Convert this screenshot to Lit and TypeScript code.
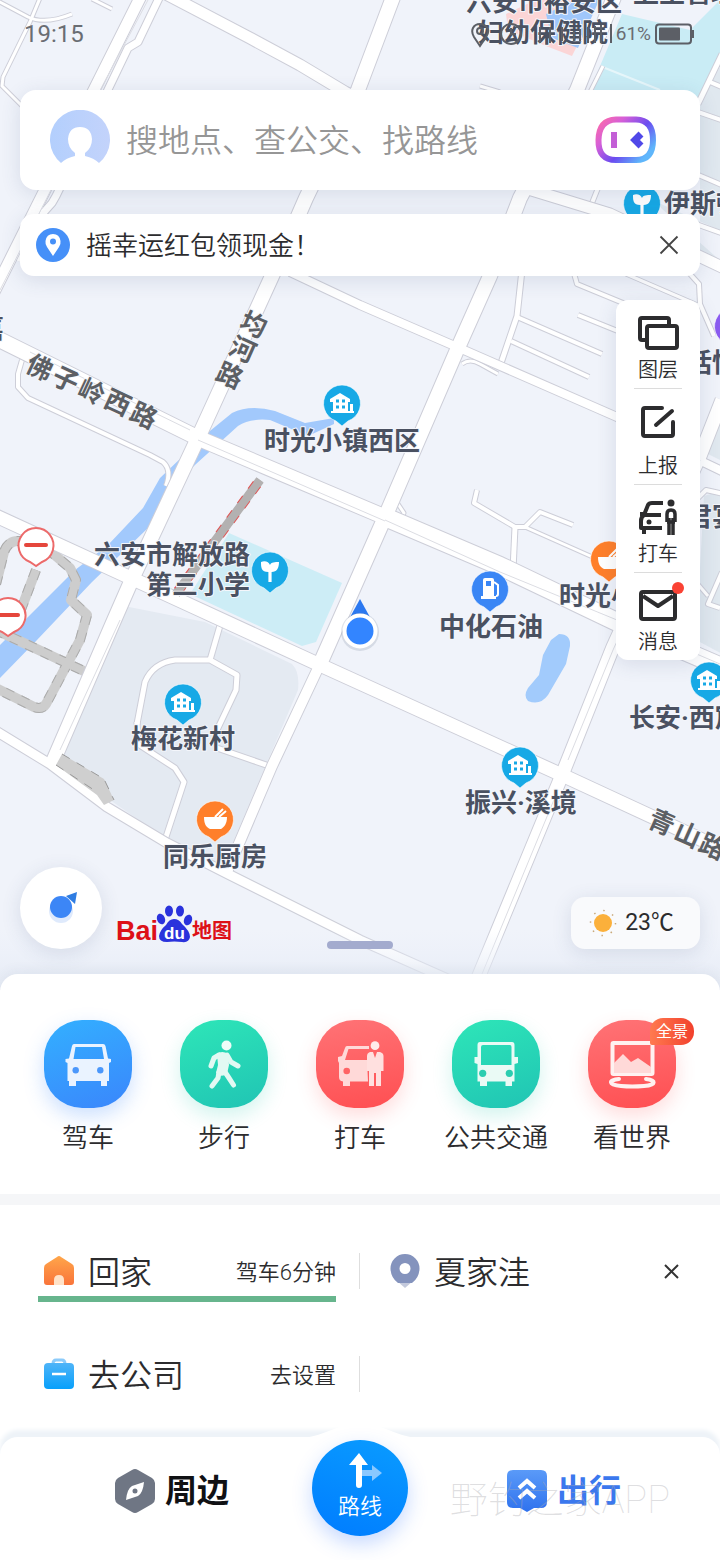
import { LitElement, html, svg, css } from "lit";
import { customElement } from "lit/decorators.js";

type Road = [string, number];
type Kind = "house" | "leaf" | "food" | "fuel" | "shop";

const lanes: Road[] = [
  ["M-4 0L28 17Q45 25 72 14", 3],
  ["M40 -2L30 22L3 77L2 86L24 108", 3],
  ["M92 -1L112 9", 3],
  ["M22 360L18 374L18 387L28 398L150 455L163 462Q172 470 166 486", 4],
  ["M221 622L210 660", 5],
  ["M137 724L145 682Q153 663 175 660L210 660L237 675L236 690L217 730", 5],
  ["M137 722L138 744L175 768L184 782L165 840", 5],
  ["M217 748L272 767", 5],
  ["M522 270L517 316L500 366", 5],
  ["M517 317L602 354", 4],
  ["M511 341L589 377", 4],
  ["M462 364Q470 358 480 364L498 374", 3],
  ["M573 270L577 284L640 310", 4],
  ["M626 274L700 306", 3],
  ["M690 274L699 284L700 304L714 336", 4],
  ["M578 315L640 340", 4],
  ["M477 490L474 503L515 527L525 527L540 512L573 525", 4],
  ["M515 527L513 570", 5],
  ["M525 527L606 563", 3],
  ["M398 504L404 513L400 520", 3],
  ["M598 188L590 208", 4],
  ["M603 66L588 96", 3],
  ["M722 54L698 104", 5],
  ["M710 82L724 88", 4],
  ["M698 112L724 121", 4],
  ["M696 174L724 186", 4],
  ["M696 224L724 234", 4],
  ["M696 500L706 490L724 494", 4],
  ["M722 572L708 604L720 608", 4],
  ["M696 582L708 596", 3],
  ["M480 86L500 92", 3],
];

const streets: Road[] = [
  ["M141 -4L92 94L45 190L-6 292", 11],
  ["M160 -4L138 42L128 48L104 98L56 196L52 203L44 212L20 262", 7],
  ["M166 -6L250 38L300 65L345 92L525 188L610 214L724 268", 11],
  ["M395 -8L358 90L306 198L272 276L198 438L133 577L112 625L52 764", 14],
  ["M616 -8L577 90L520 198L490 276L457 350L385 517L320 664", 14],
  ["M320 664L272 766L226 874", 10],
  ["M290 272L360 305L457 347L617 417L703 462L724 472", 8],
  ["M-4 338L198 438L385 517", 15],
  ["M385 517L500 566L617 622L724 668", 18],
  ["M-4 516L133 579L320 665L562 775L724 850", 13],
  ["M-4 731L50 764L107 807L167 843L228 874L360 940L450 980", 9],
  ["M722 400L700 456L613 647L562 775L478 978", 13],
];

const medians = [
  "M148 0L96 98L50 192L0 290",
  "M385 520L500 572L617 620L720 664",
  "M198 440L385 521",
  "M120 620L60 750",
  "M700 460L613 650L568 760M558 790L482 974",
  "M30 352L190 430",
];

const places: { text: string; x: number; y: number; end?: boolean; pin?: [Kind, number, number] }[] = [
  { text: "六安市裕安区", x: 466, y: 11 },
  { text: "妇幼保健院", x: 478, y: 42 },
  { text: "卫生管理", x: 633, y: 2 },
  { text: "伊斯顿", x: 664, y: 213, pin: ["leaf", 642, 203] },
  { text: "时光小镇西区", x: 264, y: 450, pin: ["house", 342, 403] },
  { text: "六安市解放路", x: 250, y: 564, end: true, pin: ["leaf", 270, 570] },
  { text: "第三小学", x: 250, y: 594, end: true },
  { text: "中化石油", x: 439, y: 636, pin: ["fuel", 490, 589] },
  { text: "时光小镇", x: 559, y: 605, pin: ["food", 609, 559] },
  { text: "梅花新村", x: 131, y: 748, pin: ["house", 183, 702] },
  { text: "长安·西宸", x: 629, y: 727, pin: ["house", 709, 680] },
  { text: "振兴·溪境", x: 465, y: 812, pin: ["house", 520, 765] },
  { text: "同乐厨房", x: 163, y: 866, pin: ["food", 215, 819] },
  { text: "恬恬", x: 686, y: 372, pin: ["shop", 733, 326] },
  { text: "君宴", x: 686, y: 526 },
  { text: "嘉", x: -22, y: 338 },
];

const roadNames: { text: string; angle: number; at: [number, number][] }[] = [
  { text: "佛子岭西路", angle: 25, at: [[40, 367], [66, 379], [92, 391], [118, 402], [144, 415]] },
  { text: "均河路", angle: 24, at: [[254, 324], [243, 349], [230, 375]] },
  { text: "青山路", angle: 24, at: [[662, 822], [688, 834], [713, 846]] },
];

const pinColors: Record<Kind, string> = {
  house: "#17a9e6",
  leaf: "#17a9e6",
  food: "#ff7f2a",
  fuel: "#3a86f5",
  shop: "#8a5cf0",
};

const glyphs: Record<Kind, unknown> = {
  house: svg`<path fill="#fff" d="M-12 -4L-2 -10L8 -4V-1H6V8H8V1H11V8H12V10H-11V8H-9V-1H-12Z"/>
    <path stroke="#17a9e6" stroke-width="3" d="M-6 -2H-3M0 -2H3M-6 4H-3M0 4H3"/>`,
  leaf: svg`<path fill="#fff" d="M-1.600 12V2C-9 2 -9 -3 -9 -8C-5 -10 -1 -8 0 -5C1 -8 5 -8 9 -8C9 -2 7 2 1.600 2V12Z"/>`,
  food: svg`<path fill="#fff" d="M-11 -2H12C12 5 9 8 6 10H-5C-9 8 -11 5 -11 -2Z"/>
    <path stroke="#fff" stroke-width="2" d="M0 -2L8 -10M4 -2L11 -8"/>`,
  fuel: svg`<path fill="#fff" fill-rule="evenodd" d="M-7 -9Q-7 -11 -5 -11H2Q4 -11 4 -9V7H6V10H-9V7H-7ZM-4 -8V-3H1V-8Z"/>
    <path fill="none" stroke="#fff" stroke-width="2" d="M4 -7L8 -4V5Q8 7 6 7"/>`,
  shop: svg`<circle r="6" fill="#fff"/>`,
};

const pin = (kind: Kind, x: number, y: number) => svg`
  <g transform="translate(${x} ${y})">
    <path fill="${pinColors[kind]}" stroke="#fff" stroke-opacity=".6" stroke-width="1"
      d="M0 23L-6 18A18.500 18.500 0 1 1 6 18Z"/>
    ${glyphs[kind]}
  </g>`;

const closedPin = (x: number, y: number) => svg`
  <g transform="translate(${x} ${y})">
    <path fill="#fff" stroke="#ec6a6a" stroke-width="2" d="M0 21L-6 17A17.500 17.500 0 1 1 6 17Z"/>
    <path stroke="#e5463c" stroke-width="4" stroke-linecap="round" d="M-10 0H10"/>
  </g>`;

const roadName = (r: (typeof roadNames)[number]) => {
  const a = (r.angle * Math.PI) / 180;
  const pts = r.at.map(([x, y]) => [
    x - 13 * Math.cos(a) - 10 * Math.sin(a),
    y - 13 * Math.sin(a) + 10 * Math.cos(a),
  ]);
  return svg`<text class="road-name" x="${pts.map((p) => p[0].toFixed(1)).join(" ")}"
    y="${pts.map((p) => p[1].toFixed(1)).join(" ")}" rotate="${r.angle}">${r.text}</text>`;
};

@customElement("city-map")
class CityMap extends LitElement {
  static styles = css`
    :host { display: block; }
    svg { display: block; width: 100%; height: auto; }
    .casing { fill: none; stroke: #cdced8; stroke-linejoin: round; }
    .fill { fill: none; stroke: #fff; stroke-linejoin: round; }
    .median { fill: none; stroke: #dcdde3; stroke-width: 1; }
    .closed { fill: none; stroke: #cdcdcd; stroke-linejoin: round; }
    .closed-edge { fill: none; stroke: #aaa; stroke-linejoin: round; stroke-dasharray: 9 8; }
    text {
      font-family: Roboto, "Noto Sans CJK SC", sans-serif;
      font-size: 26px;
      font-weight: 700;
      paint-order: stroke;
      stroke: #f4f6fb;
      stroke-width: 2px;
      stroke-linejoin: round;
      fill: #4a5161;
    }
    .road-name { fill: #5c5f64; }
  `;

  render() {
    const closed = "M-4 584L4 552Q8 541 18 541H38L70 568L76 580L71 600L87 615L80 640L46 704Q42 710 34 707L-4 688M36 570L20 612M-4 630L88 673";
    return html`
      <svg viewBox="0 0 720 990" role="img" aria-label="地图">
        <defs>
          <linearGradient id="fade" x1="0" y1="0" x2="0" y2="1">
            <stop offset="0" stop-color="#e9effa" stop-opacity="0" />
            <stop offset="1" stop-color="#e6ebf4" />
          </linearGradient>
        </defs>
        <rect width="720" height="990" fill="#f0f3fa" />
        <path fill="#e4eaf2" d="M124 606L205 622L292 664Q300 672 298 690L222 868L176 846L110 800L62 756Z" />
        <path fill="#e0e8ef" d="M724 60L700 100V250L724 262ZM724 404L704 452L724 462ZM724 490L704 496L696 640L724 655ZM652 200L724 232V264Z" />
        <path fill="#cdedf6" d="M229 533L342 583L316 642L302 646L190 594Z" />
        <path fill="#c9ecf5" d="M622 14L690 30L724 -4V56L700 104H584Z" />
        <path stroke="#e6f6fa" stroke-width="2" d="M600 66L660 90" />
        <path fill="#fbd5d6" d="M506 14L540 -2H592L580 40L572 56L546 46L508 30Z" />
        <path fill="#9fc7fb" d="M546 14L578 -2H600L578 48L552 38Z" />
        <path fill="#a2c9fc" d="M-2 647L75 570L108 545L143 508L160 478L205 435L232 413Q250 404 275 411L305 423L334 418V424L308 436L270 420Q250 418 238 426L196 464L165 495L148 528L92 582L37 640L-2 680Z" />
        <path fill="#a2cbfc" d="M559 634Q571 634 570 646L566 664L548 695Q540 706 528 701Q523 696 528 688L539 675L543 655L551 640Z" />

        ${lanes.map(([d, w]) => svg`<path class="casing" d="${d}" stroke-width="${w + 2}"/>`)}
        ${lanes.map(([d, w]) => svg`<path class="fill" d="${d}" stroke-width="${w}"/>`)}
        <path class="closed" stroke-width="10" d="${closed}" />
        <path class="closed-edge" stroke-width="10" d="${closed}" />
        <path class="closed" stroke-width="8" d="${closed}" />
        ${streets.map(([d, w]) => svg`<path class="casing" d="${d}" stroke-width="${w + 2}"/>`)}
        ${streets.map(([d, w]) => svg`<path class="fill" d="${d}" stroke-width="${w}"/>`)}
        ${medians.map((d) => svg`<path class="median" d="${d}"/>`)}
        <path fill="#cfcfcf" d="M62 754L104 779L114 800L104 805L97 795L56 765Z" />
        <path fill="none" stroke="#999" stroke-dasharray="9 8" d="M62 754L104 779L114 800M56 765L97 792" />
        <path stroke="#b3b1b1" stroke-width="9" d="M260 480L176 594" />
        <path stroke="#e05656" stroke-width="10" stroke-dasharray="9 9" d="M257 484L178 591" />
        <path stroke="#b3b1b1" stroke-width="8" d="M260 480L176 594" />

        ${closedPin(36, 545)} ${closedPin(8, 615)}
        ${places.map((p) => (p.pin ? pin(...p.pin) : ""))}
        ${places.map((p) => svg`<text x="${p.x}" y="${p.y}" text-anchor="${p.end ? "end" : "start"}">${p.text}</text>`)}
        ${roadNames.map(roadName)}

        <path fill="#2b78f0" d="M360 599L371 619H349Z" />
        <circle cx="360" cy="632" r="19" fill="#8893a8" opacity=".25" />
        <circle cx="360" cy="631" r="15.500" fill="#3385ff" stroke="#fff" stroke-width="4" />
        <rect y="930" width="720" height="60" fill="url(#fade)" />
      </svg>
    `;
  }
}

const layersIcon = html`<svg class="tool-icon" viewBox="0 0 44 44" aria-hidden="true">
  <g fill="none" stroke="#2c2c2e" stroke-width="4" stroke-linejoin="round">
    <path d="M10 28H6Q4 28 4 26V8Q4 6 6 6H31Q33 6 33 8V14" /><rect x="11" y="14" width="30" height="22" rx="2" />
  </g></svg>`;
const reportIcon = html`<svg class="tool-icon" viewBox="0 0 44 44" aria-hidden="true">
  <g fill="none" stroke="#2c2c2e" stroke-width="4" stroke-linejoin="round" stroke-linecap="round">
    <path d="M26 8H9Q7 8 7 10V34Q7 36 9 36H35Q37 36 37 34V22M20 25L36 11" />
  </g></svg>`;
const taxiIcon = html`<svg class="tool-icon" viewBox="0 0 44 44" aria-hidden="true">
  <g fill="none" stroke="#2c2c2e" stroke-width="4" stroke-linejoin="round">
    <path d="M27 7H16Q13 7 12 9L8 19Q5 21 5 25V32H26M9 19H25M8 32V38M9 18H4" />
    <path stroke-width="3.500" d="M31 26V18Q31 14 35 14T39 18V26M33 22V39M37 22V39M31 26H39" />
  </g><circle cx="35" cy="7" r="3.500" fill="#2c2c2e" /><circle cx="13" cy="26" r="2.500" fill="#2c2c2e" /></svg>`;
const mailIcon = html`<svg class="tool-icon" viewBox="0 0 44 44" aria-hidden="true">
  <g fill="none" stroke="#2c2c2e" stroke-width="4" stroke-linejoin="round">
    <rect x="5" y="8" width="34" height="27" rx="2" /><path d="M7 12L22 22L37 12" />
  </g></svg>`;

const carGlyph = svg`<path fill="#eaf3ff" fill-rule="evenodd" d="M30 24H59Q61 24 61.500 26L64 38.500L67 39V42L65 43V61H63V66H57V61H32V66H25V61H23.500V43L21.500 42V39L25 38.500L28 26Q28.500 24 30 24ZM31.500 27L29.500 39H60L58 27Z"/>
  <circle cx="31.700" cy="50.300" r="3.200" fill="#4b97fb"/><circle cx="56.300" cy="50.300" r="3.200" fill="#4b97fb"/>`;
const walkGlyph = svg`<circle cx="46.500" cy="25.500" r="5" fill="#eefcf8"/>
  <path fill="#e2f9f3" d="M37 34Q42 30 48 34L49 45L47 54Q41 58 36 53L38 45Z"/>
  <g fill="none" stroke="#e2f9f3" stroke-width="5" stroke-linecap="round" stroke-linejoin="round">
    <path d="M39 35L34 38L31 46M47 35L51 42L58 46M39 52L38 58L32 66M45 52L49 58L53.500 65"/></g>`;
const taxiGlyph = svg`<path fill="#ffd9d8" fill-rule="evenodd" d="M31 26H53V29H32.500L29 40H51L52 61.500H34V66H27V61.500Q23 61 23 57V43L22 41V37L26 36L29 28Q29.500 26 31 26Z"/>
  <circle cx="30.700" cy="51" r="3.300" fill="#ff6465"/>
  <circle cx="59" cy="25.700" r="4.400" fill="#ffeceb"/>
  <path fill="#ffe0df" d="M54 32H57L59 38L61 32H64Q67.500 33 67.500 36V51H65V66H60V53H58V66H53V51H51V36Q51 33 54 32Z"/>`;
const busGlyph = svg`<path fill="#eafaf5" fill-rule="evenodd" d="M28 22H60Q62.500 22 62.500 25V37H66V43L62.500 44V61.500H60V66H53.500V61.500H35V66H28V61.500H25.500V44L22.500 43V37H25.500V25Q25.500 22 28 22ZM31 25Q29 25 29 27V45H59.500V27Q59.500 25 58 25Z"/>
  <circle cx="30.700" cy="53.300" r="3.600" fill="#2bcdb0"/><circle cx="57.300" cy="53.300" r="3.600" fill="#2bcdb0"/>`;
const worldGlyph = svg`<rect x="24.500" y="23" width="40" height="31" rx="1" fill="none" stroke="#fff1f0" stroke-width="4"/>
  <path fill="#ffd9d8" d="M26 43L35 34L43 42L50 38L63 47V53H26Z"/>
  <path fill="none" stroke="#fff1f0" stroke-width="4" stroke-linecap="round" d="M31 59C20 60 20 65 33 66Q44 67 56 66C69 65 68 60 58 59"/>`;

const entries = [
  { label: "驾车", tone: "blue", glyph: carGlyph },
  { label: "步行", tone: "green", glyph: walkGlyph },
  { label: "打车", tone: "red", glyph: taxiGlyph },
  { label: "公共交通", tone: "green", glyph: busGlyph },
  { label: "看世界", tone: "red", glyph: worldGlyph, badge: "全景" },
];

const tools = [
  { label: "图层", icon: layersIcon },
  { label: "上报", icon: reportIcon, roomy: true },
  { label: "打车", icon: taxiIcon },
  { label: "消息", icon: mailIcon, dot: true },
];

@customElement("app-root")
class AppRoot extends LitElement {
  static styles = css`
    :host {
      display: block;
      min-height: 100vh;
      background: #fff;
      color: #2c2c2e;
      font-family: Roboto, "Noto Sans CJK SC", sans-serif;
      font-weight: 350;
      overflow: hidden;
    }
    * { box-sizing: border-box; }
    button {
      appearance: none; border: 0; padding: 0; margin: 0;
      background: none; color: inherit; font: inherit; cursor: pointer;
    }
    a { color: inherit; text-decoration: none; }
    svg { display: block; flex: none; }
    h2 { margin: 0; font: inherit; }

    .map { display: grid; }
    .map > * { grid-area: 1 / 1; min-width: 0; }
    .overlay { position: relative; display: flex; flex-direction: column; padding: 0 20px 41px; }

    .status { display: flex; align-items: center; height: 67px; margin: 0 5px 23px 4px; color: #6a6d73; font-size: 24px; font-weight: 400; }
    .status-icons { display: flex; align-items: center; gap: 4px; margin-left: auto; font-size: 19px; }

    .card { background: #fff; box-shadow: 0 4px 20px rgba(60, 80, 120, .14); }
    .search { display: flex; align-items: center; height: 100px; padding: 0 40px 0 30px; border-radius: 16px; }
    .search input {
      flex: 1; min-width: 0; margin: 0 16px; padding: 2px 0 0; border: 0; outline: 0; background: none;
      font: inherit; font-size: 32px; line-height: 48px; color: #2c2c2e;
    }
    .search input::placeholder { color: #969696; opacity: 1; }
    .notice { display: flex; align-items: center; gap: 16px; height: 62px; margin-top: 24px; padding: 0 20px 0 16px; border-radius: 14px; font-size: 26px; }
    .notice a { flex: 1; line-height: 40px; padding-top: 2px; }

    .tools { align-self: flex-end; width: 84px; margin-top: 24px; border-radius: 12px; }
    .tool { position: relative; display: block; width: 100%; padding: 12px 0 6px; font-size: 20px; line-height: 24px; }
    .tool + .tool::before { content: ""; position: absolute; top: 0; left: 18px; right: 18px; border-top: 1px solid #dcdcdc; }
    .tool-icon { width: 44px; height: 44px; margin: 0 auto 2px; }
    .roomy .tool-icon { margin-bottom: 10px; }
    .dot { position: absolute; top: 10px; right: 16px; width: 12px; height: 12px; border-radius: 50%; background: #fa4234; }

    .foot { display: grid; grid-template-columns: 1fr auto 1fr; align-items: end; margin-top: auto; }
    .foot-left { display: flex; align-items: flex-end; gap: 14px; }
    .compass { width: 82px; height: 82px; border-radius: 50%; }
    .handle { width: 66px; height: 8px; border-radius: 4px; background: #a3abce; }
    .weather { justify-self: end; display: flex; align-items: center; gap: 8px; height: 52px; padding: 0 26px 0 18px; border-radius: 14px; background: #f9fafc; font-size: 23px; font-weight: 400; line-height: 30px; }
    .logo-text { font-family: "Liberation Sans", sans-serif; font-size: 27px; font-weight: 700; fill: #dd1018; }
    .logo-cn { font-family: "Noto Sans CJK SC", sans-serif; font-size: 20px; font-weight: 700; fill: #dd1018; }
    .logo-du { font-family: "Liberation Sans", sans-serif; font-size: 17px; font-weight: 700; fill: #fff; }

    .sheet { position: relative; margin-top: -16px; border-radius: 18px 18px 0 0; background: #fff; box-shadow: 0 -4px 12px rgba(60, 80, 120, .06); }
    .entries { display: grid; grid-template-columns: repeat(5, 1fr); padding: 46px 20px 36px; }
    .entry { display: grid; justify-items: center; gap: 10px; font-size: 26px; line-height: 40px; white-space: nowrap; }
    .tile { position: relative; width: 88px; height: 88px; border-radius: 38px; }
    .blue { background: linear-gradient(160deg, #33b0ff, #3a86fc); box-shadow: 0 8px 20px rgba(58, 134, 252, .26); }
    .green { background: linear-gradient(160deg, #2ee6b8, #20c4b4); box-shadow: 0 8px 20px rgba(32, 200, 170, .2); }
    .red { background: linear-gradient(170deg, #ff7376, #ff4f52); box-shadow: 0 8px 20px rgba(255, 80, 80, .2); }
    .badge { position: absolute; top: -2px; right: -18px; padding: 0 6px; border-radius: 13px 13px 13px 2px; background: linear-gradient(90deg, #ff7a50, #f2402c); color: #fff; font-size: 16px; line-height: 27px; font-weight: 400; }

    .trips { display: grid; grid-template-columns: 1fr 1fr; border-top: 11px solid #f5f6f8; padding: 28px 0 0; }
    .trip { display: flex; align-items: center; gap: 14px; height: 76px; margin-bottom: 27px; padding: 0 40px 0 30px; font-size: 32px; line-height: 46px; }
    .trip:nth-child(odd) { padding: 0 24px 0 44px; background: linear-gradient(#dedede, #dedede) right center / 1px 36px no-repeat; }
    .trip h2, .trip small { padding-top: 4px; }
    .trip small { margin-left: auto; font-size: 22px; }
    .trip button { margin-left: auto; }
    .progress { position: absolute; left: 38px; width: calc(50% - 62px); height: 6px; margin-top: 55px; background: #67b58d; }

    .nav { position: relative; display: grid; grid-template-columns: 1fr 96px 1fr; height: 123px; margin-top: -2px; padding-top: 3px; border-radius: 18px 18px 0 0; background: #fff; box-shadow: 0 -7px 4px #eef3f8; }
    .hump { position: absolute; left: calc(50% - 64px); top: -13px; }
    .tab { display: flex; align-items: center; justify-content: center; gap: 10px; height: 102px; font-size: 32px; line-height: 44px; font-weight: 700; color: #101114; }
    .tab:first-of-type { padding-left: 32px; }
    .active { color: #3b78ee; }
    .route { position: relative; display: grid; justify-items: center; align-content: start; width: 96px; height: 96px; padding-top: 12px; border-radius: 50%; background: linear-gradient(20deg, #007cff, #0a9cff); box-shadow: 0 8px 20px rgba(40, 110, 255, .26); color: #fff; font-size: 22px; line-height: 34px; }
    .watermark { position: absolute; top: 36px; right: 50px; font-size: 38px; line-height: 54px; font-weight: 100; color: rgba(170, 170, 175, .4); pointer-events: none; }
  `;

  render() {
    return html`
      <section class="map">
        <city-map></city-map>
        <div class="overlay">
          <div class="status">
            <span>19:15</span>
            <span class="status-icons">
              <svg width="142" height="30" viewBox="0 0 142 30" fill="none" stroke="#5c5f66" stroke-width="2" aria-hidden="true">
                <path d="M10 27L4 18Q1 13 3 9Q5 5 10 5T18 10Q19 14 16 18Z" /><circle cx="10" cy="12" r="3" />
                <circle cx="41" cy="15" r="10" /><path d="M41 9V15H46" />
                <path d="M70 8V24M80 8V24M92 8V22M104 22V12M110 22V10M118 24V8M125 24V7M131 24V6M141 24V5" />
              </svg>
              <span>61%</span>
              <svg width="40" height="22" viewBox="0 0 40 22" aria-hidden="true">
                <rect x="1" y="1.500" width="35" height="19" rx="3" fill="none" stroke="#5c5f66" stroke-width="2" />
                <rect x="4" y="4.500" width="21" height="13" rx="1" fill="#5c5f66" /><path stroke="#5c5f66" stroke-width="2" d="M38 7V15" />
              </svg>
            </span>
          </div>

          <div class="card search">
            <svg width="60" height="60" viewBox="0 0 60 60" aria-hidden="true">
              <defs><linearGradient id="user" x1="0" y1="0" x2="1" y2="0"><stop stop-color="#b3cffd" /><stop offset="1" stop-color="#c3d3fb" /></linearGradient></defs>
              <path fill="url(#user)" d="M11 53A30 30 0 1 1 49 53Q44 48 35 46V43Q42 38 42 29Q41 17 30 17Q19 17 18 29Q18 38 25 43V46Q16 48 11 53Z" />
            </svg>
            <input type="search" aria-label="搜索" placeholder="搜地点、查公交、找路线" />
            <button aria-label="语音助手">
              <svg width="70" height="60" viewBox="0 0 70 60" aria-hidden="true">
                <defs><linearGradient id="bot" x1="0" y1="0" x2="1" y2=".7"><stop stop-color="#ff6aa8" /><stop offset=".3" stop-color="#d55fd8" /><stop offset=".65" stop-color="#6a4cf0" /><stop offset="1" stop-color="#5fb6fb" /></linearGradient></defs>
                <path fill="#fff" stroke="url(#bot)" stroke-width="6" d="M36 9.500H46Q63 10 63 30T46 50H26Q8 50 8.500 30T26 9.500Z" />
                <path fill="#c35fd6" d="M21 22H27V38H21Z" /><path fill="none" stroke="#5048e8" stroke-width="7" d="M51 24L45 30L51 36" />
              </svg>
            </button>
          </div>

          <div class="card notice">
            <svg width="34" height="34" viewBox="0 0 34 34" aria-hidden="true">
              <circle cx="17" cy="17" r="17" fill="#4690f8" />
              <path fill="#fff" fill-rule="evenodd" d="M17 28L11 19Q9 16 9.500 13Q10.500 6 17 6T24.500 13Q25 16 23 19ZM17 10.500A3 3 0 1 0 17 16.500A3 3 0 1 0 17 10.500Z" />
            </svg>
            <a href="#">摇幸运红包领现金！</a>
            <button aria-label="关闭">
              <svg width="22" height="22" viewBox="0 0 22 22" aria-hidden="true"><path stroke="#444" stroke-width="1.800" d="M2.500 2.500L19.500 19.500M19.500 2.500L2.500 19.500" /></svg>
            </button>
          </div>

          <div class="card tools">
            ${tools.map((t) => html`
              <button class="tool ${t.roomy ? "roomy" : ""}">
                ${t.icon}${t.label}${t.dot ? html`<span class="dot"></span>` : ""}
              </button>`)}
          </div>

          <div class="foot">
            <div class="foot-left">
              <button class="card compass" aria-label="定位">
                <svg width="82" height="82" viewBox="0 0 82 82" aria-hidden="true">
                  <circle cx="41" cy="44" r="12" fill="#dfeafc" />
                  <path fill="#2f7de2" d="M57 25L55 37L46 29Z" /><circle cx="41" cy="40" r="11" fill="#3c86f6" />
                </svg>
              </button>
              <svg width="120" height="44" viewBox="0 0 120 44" role="img" aria-label="百度地图">
                <text class="logo-text" x="0" y="35">Bai</text>
                <g fill="#2a32dc">
                  <ellipse cx="45" cy="14" rx="4" ry="5.500" transform="rotate(-20 45 14)" /><ellipse cx="53" cy="6" rx="4" ry="5.500" />
                  <ellipse cx="64" cy="6" rx="4" ry="5.500" /><ellipse cx="72" cy="15" rx="4" ry="5.500" transform="rotate(20 72 15)" />
                  <path d="M58 14Q63 14 66 19Q74 26 74 32Q73 38 66 37Q58 36 51 37Q43 37 43 31Q44 25 50 20Q53 14 58 14Z" />
                </g>
                <text class="logo-du" x="48" y="34">du</text>
                <text class="logo-cn" x="76" y="33">地图</text>
              </svg>
            </div>
            <span class="handle"></span>
            <div class="card weather">
              <svg width="28" height="28" viewBox="0 0 28 28" aria-hidden="true">
                <circle cx="14" cy="14" r="9" fill="#fbb03b" />
                <circle cx="14" cy="14" r="12.500" fill="none" stroke="#c9a878" stroke-width="1.500" stroke-dasharray="1.500 8.300" />
              </svg>
              <span>23℃</span>
            </div>
          </div>
        </div>
      </section>

      <main class="sheet">
        <nav class="entries" aria-label="出行方式">
          ${entries.map((e) => html`
            <a class="entry" href="#">
              <span class="tile ${e.tone}">
                <svg width="88" height="88" viewBox="0 0 88 88" aria-hidden="true">${e.glyph}</svg>
                ${e.badge ? html`<span class="badge">${e.badge}</span>` : ""}
              </span>
              <span>${e.label}</span>
            </a>`)}
        </nav>

        <section class="trips">
          <a class="trip" href="#">
            <svg width="30" height="32" viewBox="0 0 30 32" aria-hidden="true">
              <defs><linearGradient id="home" x1="0" y1="0" x2="0" y2="1"><stop stop-color="#ffa64a" /><stop offset="1" stop-color="#f9743a" /></linearGradient></defs>
              <path fill="url(#home)" d="M13 2Q15 0 17 2L28 9Q30 10 30 13V27Q30 30 27 30H3Q0 30 0 27V13Q0 10 2 9Z" />
              <path fill="#ffe2c8" d="M10 30V25Q10 20 15 20T20 25V30Z" />
            </svg>
            <h2>回家</h2><small>驾车6分钟</small><span class="progress"></span>
          </a>
          <div class="trip">
            <svg width="30" height="34" viewBox="0 0 30 34" aria-hidden="true">
              <path fill="#c3c9dc" d="M7 27L15 34L23 27Z" />
              <path fill="#8493bd" fill-rule="evenodd" d="M15 0A14.500 14.500 0 0 1 29.500 15Q29 24 22 29H8Q1 24 .5 15A14.500 14.500 0 0 1 15 0ZM15 9A5.500 5.500 0 1 0 15 20A5.500 5.500 0 1 0 15 9Z" />
            </svg>
            <h2>夏家洼</h2>
            <button aria-label="删除">
              <svg width="18" height="18" viewBox="0 0 18 18" aria-hidden="true"><path stroke="#333" stroke-width="2" d="M3 3L16 16M16 3L3 16" /></svg>
            </button>
          </div>
          <a class="trip" href="#">
            <svg width="30" height="32" viewBox="0 0 30 32" aria-hidden="true">
              <defs><linearGradient id="bag" x1="0" y1="0" x2="0" y2="1"><stop stop-color="#4fb4f8" /><stop offset="1" stop-color="#08a0fb" /></linearGradient></defs>
              <path fill="none" stroke="#8ccbfa" stroke-width="3" d="M9 6Q9 2 12 2H18Q21 2 21 6" />
              <rect y="5" width="30" height="26" rx="4" fill="url(#bag)" /><path stroke="#fff" stroke-width="2.500" d="M8 16H22" />
            </svg>
            <h2>去公司</h2><small>去设置</small>
          </a>
        </section>
      </main>

      <nav class="nav" aria-label="主导航">
        <svg class="hump" width="128" height="22" viewBox="0 0 128 22" aria-hidden="true"><path fill="#fff" d="M0 14C30 14 36 0 64 0S98 14 128 14V22H0Z" /></svg>
        <a class="tab" href="#">
          <svg width="40" height="44" viewBox="0 0 40 44" aria-hidden="true">
            <path fill="#6f7684" d="M17 1Q20 -1 23 1L37 9Q40 11 40 14V30Q40 33 37 35L23 43Q20 45 17 43L3 35Q0 33 0 30V14Q0 11 3 9Z" />
            <path fill="#fff" fill-rule="evenodd" d="M29 13Q28 24 23 27L11 31Q12 20 17 17ZM20 19.500A2.500 2.500 0 1 0 20 24.500A2.500 2.500 0 1 0 20 19.500Z" />
          </svg>
          <span>周边</span>
        </a>
        <button class="route">
          <svg width="50" height="38" viewBox="0 0 50 38" aria-hidden="true">
            <path fill="#8ac8ff" d="M26 18H37V13L47 21L37 29V24H26Z" />
            <path fill="#fff" d="M24 1L33 13H27V33Q27 36 24 36T21 33V13H14Z" />
          </svg>
          <span>路线</span>
        </button>
        <a class="tab active" href="#" aria-current="page">
          <svg width="40" height="42" viewBox="0 0 40 42" aria-hidden="true">
            <defs><linearGradient id="go" x1="0" y1="0" x2="0" y2="1"><stop stop-color="#5a9af8" /><stop offset="1" stop-color="#2f72ee" /></linearGradient></defs>
            <path fill="url(#go)" d="M6 0H34Q40 0 40 6V32Q40 38 34 38H27L20 42L13 38H6Q0 38 0 32V6Q0 0 6 0Z" />
            <path fill="none" stroke="#fff" stroke-width="4" d="M12 18L20 11L28 18M12 28L20 21L28 28" />
          </svg>
          <span>出行</span>
        </a>
        <span class="watermark">野钓之家APP</span>
      </nav>
    `;
  }
}
